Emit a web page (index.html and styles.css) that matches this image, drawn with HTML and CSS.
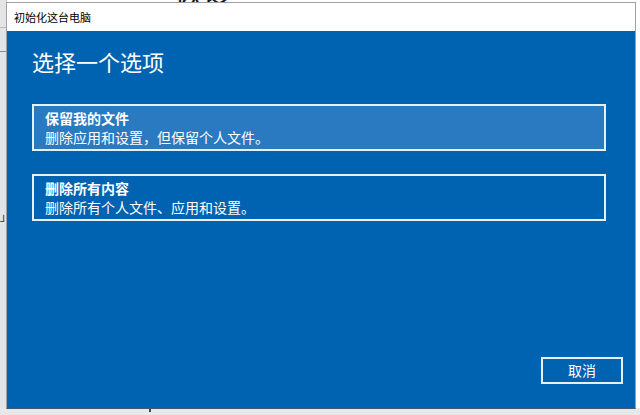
FILE: index.html
```html
<!DOCTYPE html>
<html lang="zh-CN">
<head>
<meta charset="utf-8">
<title>初始化这台电脑</title>
<link rel="stylesheet" href="styles.css">
</head>
<body>
<div class="desktop">
  <div class="behind-text">恢复</div>
  <div class="side-strip">
    <div class="side-line one"></div>
    <div class="side-line two"></div>
    <div class="side-mark">⅃</div>
  </div>
  <div class="bottom-strip"><span class="bottom-mark"></span></div>

  <div class="window">
    <div class="titlebar">初始化这台电脑</div>
    <div class="content">
      <h1 class="heading">选择一个选项</h1>
      <div class="options">
        <div class="option active">
          <div class="option-title">保留我的文件</div>
          <div class="option-desc">删除应用和设置，但保留个人文件。</div>
        </div>
        <div class="option">
          <div class="option-title">删除所有内容</div>
          <div class="option-desc">删除所有个人文件、应用和设置。</div>
        </div>
      </div>
      <div class="footer">
        <button class="cancel">取消</button>
      </div>
    </div>
  </div>
</div>
</body>
</html>
```
FILE: styles.css
```css
html, body {
  margin: 0;
  padding: 0;
}
body {
  width: 640px;
  height: 415px;
  overflow: hidden;
  background: #ffffff;
  font-family: "Noto Sans CJK SC", "Noto Sans", sans-serif;
}
.desktop {
  position: relative;
  width: 640px;
  height: 415px;
}
.behind-text {
  position: absolute;
  left: 174px;
  top: -24px;
  font-size: 30px;
  line-height: 30px;
  color: #111;
}
.side-strip {
  position: absolute;
  left: 0;
  top: 0;
  width: 6px;
  height: 415px;
  background: #e4e4e4;
  border-right: 1px solid #c8c8c8;
}
.side-line {
  position: absolute;
  left: 0;
  width: 6px;
  height: 1px;
  background: #8a8a8a;
}
.side-line.one { top: 27px; background: #bdbdbd; }
.side-line.two { top: 51px; }
.side-mark {
  position: absolute;
  left: 0;
  top: 212px;
  font-size: 10px;
  line-height: 12px;
  color: #333;
}
.bottom-strip {
  position: absolute;
  left: 0;
  top: 408px;
  width: 640px;
  height: 7px;
  background: #e8e8e8;
}
.bottom-mark {
  position: absolute;
  left: 149px;
  top: 1px;
  width: 2px;
  height: 3px;
  background: #444;
}
.window {
  position: absolute;
  left: 6px;
  top: 2px;
  width: 628px;
  height: 405px;
  border: 1px solid #a0a0a0;
  border-bottom-color: #3d5a78;
  display: flex;
  flex-direction: column;
  background: #0063b1;
}
.titlebar {
  height: 28px;
  flex: none;
  background: #ffffff;
  color: #000;
  font-size: 11px;
  line-height: 28px;
  padding-left: 7px;
}
.content {
  flex: 1;
  display: flex;
  flex-direction: column;
  padding: 15px 29px 24px 25px;
  color: #ffffff;
}
.heading {
  margin: 0;
  font-size: 22px;
  line-height: 30px;
  font-weight: normal;
}
.options {
  margin-top: 28px;
  display: flex;
  flex-direction: column;
  gap: 23px;
}
.option {
  box-sizing: border-box;
  height: 47px;
  border: 2px solid #e6f0f8;
  padding: 3px 11px 0 11px;
}
.option.active {
  background: #2a7ac2;
}
.option-title {
  font-size: 14px;
  line-height: 19px;
  font-weight: bold;
}
.option-desc {
  font-size: 14px;
  line-height: 19px;
}
.footer {
  margin-top: auto;
  display: flex;
  justify-content: flex-end;
  margin-right: -18px;
}
.cancel {
  box-sizing: border-box;
  width: 82px;
  height: 27px;
  margin-right: 1px;
  background: transparent;
  border: 2px solid #e6f0f8;
  color: #ffffff;
  font-family: "Noto Sans CJK SC", "Noto Sans", sans-serif;
  font-size: 14px;
  line-height: 21px;
  padding: 0;
}
```
